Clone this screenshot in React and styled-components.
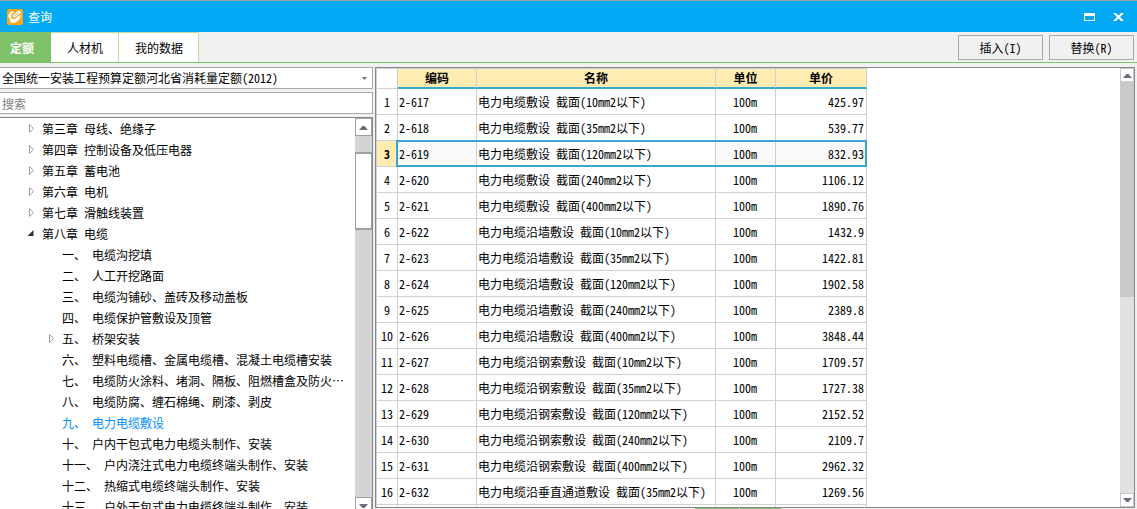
import React, { useState } from 'react';
import styled, { createGlobalStyle } from 'styled-components';

const GlobalStyle = createGlobalStyle`
  * {
    box-sizing: border-box;
  }

  body {
    margin: 0;
    background-color: #f1f1f1;
  }

  body, button, input, select {
    font-family: 'Noto Sans CJK SC', sans-serif;
    font-size: 12px;
    line-height: 16px;
    font-feature-settings: 'hwid';
    color: #000;
  }
`;

const Window = styled.div`
  display: flex;
  flex-direction: column;
  height: 100vh;
  overflow: hidden;
`;

const TitleBar = styled.header`
  display: flex;
  align-items: center;
  gap: 5px;
  flex: none;
  height: 32px;
  padding: 0 8px 0 7px;
  border-top: 1px solid #a0a0a0;
  background-color: #03a9f4;
`;

const Title = styled.h1`
  flex: 1;
  margin: 0;
  font-size: 12px;
  font-weight: 400;
  color: #fff;
`;

const WindowButton = styled.button`
  display: flex;
  align-items: center;
  justify-content: center;
  width: 21px;
  height: 21px;
  margin-left: 3px;
  padding: 0;
  border: none;
  background: none;
`;

const Toolbar = styled.div`
  display: flex;
  flex: none;
  height: 31px;
  border-bottom: 1px solid #7dc56c;
`;

const Tabs = styled.nav`
  display: flex;
  flex: 1;
`;

const Tab = styled.button`
  padding: 0 15px 0 16px;
  border: 1px solid ${({ $active }) => ($active ? '#7fc269' : '#b5e0a4')};
  border-width: 1px 1px 0 0;
  background-color: ${({ $active }) => ($active ? '#7fc269' : '#fff')};
  color: ${({ $active }) => ($active ? '#fff' : '#000')};
  font-weight: ${({ $active }) => ($active ? 700 : 400)};

  &:first-child {
    padding: 0 16px 0 10px;
  }
`;

const Actions = styled.div`
  display: flex;
  gap: 6px;
  padding: 3px 3px 2px;
`;

const ActionButton = styled.button`
  width: 85px;
  padding: 0;
  border: 1px solid #a9a9a9;
  background-color: #f1f1f1;
`;

const Body = styled.main`
  display: flex;
  flex: 1;
  gap: 2px;
  min-height: 0;
  padding-top: 4px;
`;

const Sidebar = styled.aside`
  display: flex;
  flex-direction: column;
  flex: none;
  gap: 3px;
  width: 373px;
`;

const SelectBox = styled.div`
  display: flex;
  align-items: center;
  flex: none;
  height: 22px;
  padding-right: 5px;
  border: 1px solid #a9a9a9;
  border-left: none;
  background-color: #fff;
`;

const Select = styled.select`
  flex: 1;
  height: 20px;
  padding: 0 2px;
  border: none;
  outline: none;
  appearance: none;
  background: none;
`;

const Search = styled.input`
  flex: none;
  height: 22px;
  padding: 0 2px;
  border: 1px solid #a9a9a9;
  border-left: none;
  outline: none;
  background-color: #fff;

  &::placeholder {
    color: #808080;
  }
`;

/* the tree runs on a little below the window edge */
const TreePanel = styled.div`
  display: flex;
  flex: 1;
  min-height: 0;
  margin-bottom: -6px;
  border-top: 1px solid #868890;
  border-right: 1px solid #868890;
  background-color: #fff;
`;

const Tree = styled.ul`
  flex: 1;
  min-width: 0;
  margin: 0;
  padding: 0;
  overflow: hidden;
  list-style: none;
`;

const TreeItem = styled.button`
  display: flex;
  align-items: center;
  width: 100%;
  height: 21px;
  padding: 0 0 0 ${({ $level }) => 6 + $level * 20}px;
  border: none;
  background: none;
  color: ${({ $active }) => ($active ? '#0090ff' : '#000')};
  white-space: nowrap;
`;

const Arrow = styled.span`
  display: flex;
  flex: none;
  width: 16px;
`;

const ScrollTrack = styled.div`
  display: flex;
  flex-direction: column;
  flex: none;
  width: ${({ $wide }) => ($wide ? 17 : 14)}px;
  background-color: ${({ $wide }) => ($wide ? '#d4d4d4' : '#e1e1e1')};
`;

const ScrollButton = styled.button`
  display: flex;
  align-items: center;
  justify-content: center;
  flex: none;
  height: ${({ $tall }) => ($tall ? 18 : 14)}px;
  padding: 0;
  border: 1px solid ${({ $tall }) => ($tall ? '#a0a0a0' : '#c8c8c8')};
  background-color: #fff;
`;

const TreeThumb = styled.div`
  height: 78px;
  margin-top: 16px;
  border: 1px solid #a0a0a0;
  border-width: 2px 1px;
  background-color: #fff;
`;

const GridThumb = styled.div`
  height: 215px;
  background-color: #c9c9c9;
`;

const Spacer = styled.div`
  flex: 1;
`;

const Content = styled.section`
  display: flex;
  flex-direction: column;
  flex: 1;
  min-width: 0;
  padding-right: 2px;
`;

const GridPanel = styled.div`
  display: flex;
  flex: 1;
  min-height: 0;
  border: 1px solid #868890;
  background-color: #fff;
`;

const GridArea = styled.div`
  flex: 1;
  min-width: 0;
  overflow: hidden;
`;

const Grid = styled.table`
  width: 491px;
  table-layout: fixed;
  border-collapse: separate;
  border-spacing: 0;
  border-top: 1px solid #d0d0d0;
  border-left: 1px solid #d0d0d0;
`;

const HeadCell = styled.th`
  height: 20px;
  padding: 0;
  border-right: 1px solid #d0d0d0;
  border-bottom: 2px solid #3ba7d1;
  background-color: #ffecb3;
  font-weight: 700;
`;

const CornerCell = styled.td`
  border-right: 1px solid #d0d0d0;
  border-bottom: 1px solid #d0d0d0;
`;

const RowNumber = styled.th`
  height: 26px;
  padding: 0;
  border-right: 1px solid #d0d0d0;
  border-bottom: 1px solid #d0d0d0;
  font-weight: 400;
`;

const Cell = styled.td`
  padding: 0 2px 0 1px;
  border-right: 1px solid #d0d0d0;
  border-bottom: 1px solid #d0d0d0;
  text-align: ${({ $align }) => $align || 'left'};
  white-space: nowrap;
`;

const Row = styled.tr`
  ${({ $selected }) => $selected && `
    position: relative;

    /* selection frame over the cell borders */
    &::after {
      content: '';
      position: absolute;
      top: -1px;
      right: 0;
      bottom: 0;
      left: 19px;
      border: 2px solid #3ba7d1;
      pointer-events: none;
    }

    ${RowNumber} {
      background-color: #ffecb3;
      font-weight: 700;
    }

    ${Cell} {
      background-color: #fafafa;
    }

    ${Cell}:nth-child(3) {
      background-color: #fff;
    }
  `}
`;

const BottomEdge = styled.div`
  display: flex;
  flex: none;
  gap: 1px;
  height: 1px;
  padding-left: 320px;
`;

const EdgeTab = styled.div`
  width: ${({ $width }) => $width}px;
  background-color: #7dc56c;
`;

const tabs = ['定额', '人材机', '我的数据'];

const treeItems = [
  { level: 1, text: '第三章 母线、绝缘子', arrow: 'closed' },
  { level: 1, text: '第四章 控制设备及低压电器', arrow: 'closed' },
  { level: 1, text: '第五章 蓄电池', arrow: 'closed' },
  { level: 1, text: '第六章 电机', arrow: 'closed' },
  { level: 1, text: '第七章 滑触线装置', arrow: 'closed' },
  { level: 1, text: '第八章 电缆', arrow: 'open' },
  { level: 2, text: '一、 电缆沟挖填' },
  { level: 2, text: '二、 人工开挖路面' },
  { level: 2, text: '三、 电缆沟铺砂、盖砖及移动盖板' },
  { level: 2, text: '四、 电缆保护管敷设及顶管' },
  { level: 2, text: '五、 桥架安装', arrow: 'closed' },
  { level: 2, text: '六、 塑料电缆槽、金属电缆槽、混凝土电缆槽安装' },
  { level: 2, text: '七、 电缆防火涂料、堵洞、隔板、阻燃槽盒及防火…' },
  { level: 2, text: '八、 电缆防腐、缠石棉绳、刷漆、剥皮' },
  { level: 2, text: '九、 电力电缆敷设' },
  { level: 2, text: '十、 户内干包式电力电缆头制作、安装' },
  { level: 2, text: '十一、 户内浇注式电力电缆终端头制作、安装' },
  { level: 2, text: '十二、 热缩式电缆终端头制作、安装' },
  { level: 2, text: '十三、 户外干包式电力电缆终端头制作、安装' },
];

const rows = [
  ['2-617', '电力电缆敷设 截面(10mm2以下)', '425.97'],
  ['2-618', '电力电缆敷设 截面(35mm2以下)', '539.77'],
  ['2-619', '电力电缆敷设 截面(120mm2以下)', '832.93'],
  ['2-620', '电力电缆敷设 截面(240mm2以下)', '1106.12'],
  ['2-621', '电力电缆敷设 截面(400mm2以下)', '1890.76'],
  ['2-622', '电力电缆沿墙敷设 截面(10mm2以下)', '1432.9'],
  ['2-623', '电力电缆沿墙敷设 截面(35mm2以下)', '1422.81'],
  ['2-624', '电力电缆沿墙敷设 截面(120mm2以下)', '1902.58'],
  ['2-625', '电力电缆沿墙敷设 截面(240mm2以下)', '2389.8'],
  ['2-626', '电力电缆沿墙敷设 截面(400mm2以下)', '3848.44'],
  ['2-627', '电力电缆沿钢索敷设 截面(10mm2以下)', '1709.57'],
  ['2-628', '电力电缆沿钢索敷设 截面(35mm2以下)', '1727.38'],
  ['2-629', '电力电缆沿钢索敷设 截面(120mm2以下)', '2152.52'],
  ['2-630', '电力电缆沿钢索敷设 截面(240mm2以下)', '2109.7'],
  ['2-631', '电力电缆沿钢索敷设 截面(400mm2以下)', '2962.32'],
  ['2-632', '电力电缆沿垂直通道敷设 截面(35mm2以下)', '1269.56'],
];

const Logo = () => (
  <svg width="16" height="16" viewBox="0 0 16 16" aria-hidden="true">
    <rect width="16" height="16" rx="2" fill="#fba81c" />
    <path d="M1.5 5.5 C2 3.5 4.5 2 7 2.2 L4.5 6 L4 9.5 L7.5 9.8 L14 5.5 C13.5 10 10.5 13.5 6.5 14 C4 14 2.2 12.5 3 10 C1.5 9 1 7.5 1.5 5.5 Z" fill="#fffaf0" />
    <path d="M5.5 8.5 L6.5 5.5 L11.5 1.2 L14.2 3.6 L9 8.2 Z" fill="#fff" />
    <path d="M5.2 8.8 L8.5 8.6 L13.8 4.4 M7.2 7 L11.4 3.4" fill="none" stroke="#f5a52a" strokeWidth="0.8" />
  </svg>
);

const TreeArrow = ({ type }) => (
  <svg width="8" height="9" viewBox="0 0 8 9" aria-hidden="true">
    {type === 'open' ? (
      <path d="M7.5 1 V7 H1.5 Z" fill="#333" />
    ) : (
      <path d="M3.5 0.5 L7.5 4.5 L3.5 8.5 Z" fill="#fff" stroke="#a0a0a0" />
    )}
  </svg>
);

const ScrollArrow = ({ down }) => (
  <svg width="9" height="5" viewBox="0 0 9 5" aria-hidden="true">
    <path d={down ? 'M0 0 H9 L5.5 4 H3.5 Z' : 'M0 5 H9 L5.5 1 H3.5 Z'} fill="#6c6e7c" />
  </svg>
);

const App = () => {
  const [activeTab, setActiveTab] = useState(0);
  const [activeItem, setActiveItem] = useState(14);
  const [selectedRow, setSelectedRow] = useState(2);
  const [search, setSearch] = useState('');

  return (
    <Window lang="zh-CN">
      <GlobalStyle />
      <TitleBar>
        <Logo />
        <Title>查询</Title>
        <WindowButton aria-label="最大化">
          <svg width="11" height="8" viewBox="0 0 11 8">
            <path d="M0 0 H11 V8 H0 Z M1 3 V7 H10 V3 Z" fill="#fff" fillRule="evenodd" />
          </svg>
        </WindowButton>
        <WindowButton aria-label="关闭">
          <svg width="11" height="8" viewBox="0 0 11 8">
            <path d="M0 0 H3 L5.5 2.5 L8 0 H11 L7 4 L11 8 H8 L5.5 5.5 L3 8 H0 L4 4 Z" fill="#fff" />
          </svg>
        </WindowButton>
      </TitleBar>

      <Toolbar>
        <Tabs>
          {tabs.map((tab, index) => (
            <Tab key={tab} $active={index === activeTab} onClick={() => setActiveTab(index)}>
              {tab}
            </Tab>
          ))}
        </Tabs>
        <Actions>
          <ActionButton>插入(I)</ActionButton>
          <ActionButton>替换(R)</ActionButton>
        </Actions>
      </Toolbar>

      <Body>
        <Sidebar>
          <SelectBox>
            <Select aria-label="定额库">
              <option>全国统一安装工程预算定额河北省消耗量定额(2012)</option>
            </Select>
            <svg width="5" height="3" viewBox="0 0 5 3" aria-hidden="true">
              <path d="M0 0 H5 L2.5 3 Z" fill="#6c6e7c" />
            </svg>
          </SelectBox>
          <Search
            aria-label="搜索"
            placeholder="搜索"
            value={search}
            onChange={(e) => setSearch(e.target.value)}
          />
          <TreePanel>
            <Tree>
              {treeItems.map((item, index) => (
                <li key={item.text}>
                  <TreeItem
                    $level={item.level}
                    $active={index === activeItem}
                    onClick={() => setActiveItem(index)}
                  >
                    <Arrow>{item.arrow && <TreeArrow type={item.arrow} />}</Arrow>
                    {item.text}
                  </TreeItem>
                </li>
              ))}
            </Tree>
            <ScrollTrack $wide>
              <ScrollButton $tall aria-label="向上滚动"><ScrollArrow /></ScrollButton>
              <TreeThumb />
              <Spacer />
              <ScrollButton $tall aria-label="向下滚动"><ScrollArrow down /></ScrollButton>
            </ScrollTrack>
          </TreePanel>
        </Sidebar>

        <Content>
          <GridPanel>
            <GridArea>
              <Grid>
                <colgroup>
                  <col style={{ width: 21 }} />
                  <col style={{ width: 79 }} />
                  <col style={{ width: 239 }} />
                  <col style={{ width: 60 }} />
                  <col style={{ width: 91 }} />
                </colgroup>
                <thead>
                  <tr>
                    <CornerCell />
                    <HeadCell scope="col">编码</HeadCell>
                    <HeadCell scope="col">名称</HeadCell>
                    <HeadCell scope="col">单位</HeadCell>
                    <HeadCell scope="col">单价</HeadCell>
                  </tr>
                </thead>
                <tbody>
                  {rows.map(([code, name, price], index) => (
                    <Row key={code} $selected={index === selectedRow} onClick={() => setSelectedRow(index)}>
                      <RowNumber scope="row">{index + 1}</RowNumber>
                      <Cell>{code}</Cell>
                      <Cell>{name}</Cell>
                      <Cell $align="center">100m</Cell>
                      <Cell $align="right">{price}</Cell>
                    </Row>
                  ))}
                  <Row>
                    <RowNumber />
                    <Cell />
                    <Cell />
                    <Cell />
                    <Cell />
                  </Row>
                </tbody>
              </Grid>
            </GridArea>
            <ScrollTrack>
              <ScrollButton aria-label="向上滚动"><ScrollArrow /></ScrollButton>
              <GridThumb />
              <Spacer />
              <ScrollButton aria-label="向下滚动"><ScrollArrow down /></ScrollButton>
            </ScrollTrack>
          </GridPanel>
          <BottomEdge>
            <EdgeTab $width={44} />
            <EdgeTab $width={41} />
          </BottomEdge>
        </Content>
      </Body>
    </Window>
  );
};

export default App;
